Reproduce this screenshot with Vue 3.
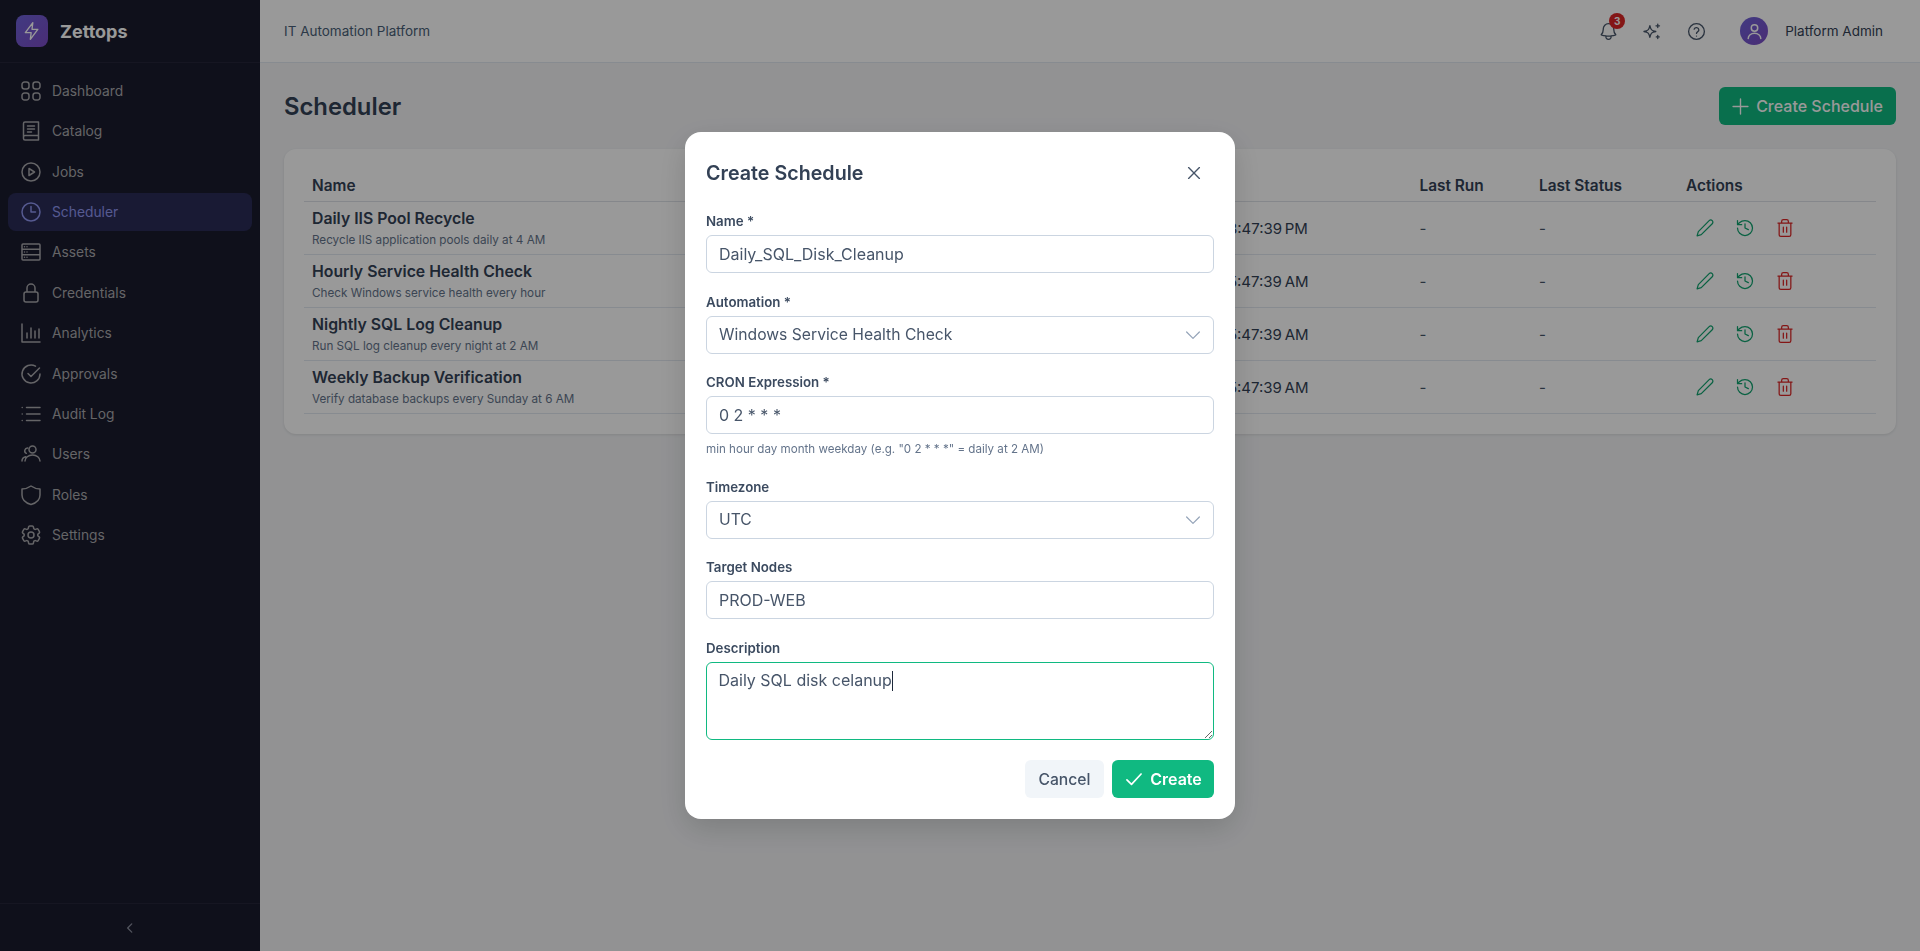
<template>
  <div class="app">
    <aside class="sidebar">
      <div class="brand">
        <div class="logo">
          <svg viewBox="0 0 24 24" width="20" height="20" fill="none" stroke="#fff" stroke-width="1.6" stroke-linejoin="round"><path d="M13 2 4 14h7l-1 8 9-12h-7l1-8z" /></svg>
        </div>
        <span class="brand-name">Zettops</span>
      </div>
      <nav class="nav">
        <a v-for="item in navItems" :key="item.label" class="nav-item" :class="{ active: item.label === 'Scheduler' }">
          <svg viewBox="0 0 24 24" width="24" height="24" fill="none" stroke="currentColor" stroke-width="1.5" stroke-linecap="round" stroke-linejoin="round"><path :d="item.icon" /></svg>
          <span>{{ item.label }}</span>
        </a>
      </nav>
      <div class="collapse">
        <svg viewBox="0 0 24 24" width="14" height="14" fill="none" stroke="currentColor" stroke-width="2.2" stroke-linecap="round" stroke-linejoin="round"><path d="M15 5l-7 7 7 7" /></svg>
      </div>
    </aside>

    <div class="content">
      <header class="topbar">
        <span class="topbar-title">IT Automation Platform</span>
        <div class="topbar-right">
          <button class="top-icon">
            <svg viewBox="0 0 24 24" width="21" height="21" fill="none" stroke="currentColor" stroke-width="1.5" stroke-linecap="round" stroke-linejoin="round"><path d="M14.857 17.082a23.848 23.848 0 005.454-1.31A8.967 8.967 0 0118 9.75V9A6 6 0 006 9v.75a8.967 8.967 0 01-2.312 6.022c1.733.64 3.56 1.085 5.455 1.31m5.714 0a24.255 24.255 0 01-5.714 0m5.714 0a3 3 0 11-5.714 0" /></svg>
            <span class="badge">3</span>
          </button>
          <button class="top-icon">
            <svg viewBox="0 0 24 24" width="21" height="21" fill="none" stroke="currentColor" stroke-width="1.5" stroke-linecap="round" stroke-linejoin="round"><path d="M9.813 15.904L9 18.75l-.813-2.846a4.5 4.5 0 00-3.09-3.09L2.25 12l2.846-.813a4.5 4.5 0 003.09-3.09L9 5.25l.813 2.846a4.5 4.5 0 003.09 3.09L15.75 12l-2.846.813a4.5 4.5 0 00-3.09 3.09zM18 3.500v4M16 5.500h4M18 16.500v3.500M16.300 18.200h3.400" /></svg>
          </button>
          <button class="top-icon">
            <svg viewBox="0 0 24 24" width="21" height="21" fill="none" stroke="currentColor" stroke-width="1.5" stroke-linecap="round" stroke-linejoin="round"><circle cx="12" cy="12" r="9" /><path d="M9.300 9.300a2.800 2.800 0 015.400 .9c0 1.900-2.700 2.200-2.700 4M12 17.200h.01" /></svg>
          </button>
          <div class="user">
            <div class="avatar">
              <svg viewBox="0 0 24 24" width="21" height="21" fill="none" stroke="#fff" stroke-width="1.7" stroke-linecap="round" stroke-linejoin="round"><circle cx="12" cy="8" r="3.700" /><path d="M4.800 20a7.200 6 0 0114.400 0" /></svg>
            </div>
            <span class="user-name">Platform Admin</span>
          </div>
        </div>
      </header>

      <main class="page">
        <div class="page-head">
          <h1>Scheduler</h1>
          <button class="btn-create">
            <svg viewBox="0 0 24 24" width="21" height="21" fill="none" stroke="currentColor" stroke-width="1.6" stroke-linecap="round"><path d="M12 3.500v17M3.500 12h17" /></svg>
            Create Schedule
          </button>
        </div>

        <section class="card">
          <table>
            <colgroup>
              <col class="c-name" /><col class="c-next" /><col class="c-last" /><col class="c-status" /><col />
            </colgroup>
            <thead>
              <tr>
                <th>Name</th>
                <th>Next Run</th>
                <th>Last Run</th>
                <th>Last Status</th>
                <th>Actions</th>
              </tr>
            </thead>
            <tbody>
              <tr v-for="row in schedules" :key="row.name">
                <td>
                  <div class="row-name">{{ row.name }}</div>
                  <div class="row-desc">{{ row.desc }}</div>
                </td>
                <td class="next">{{ row.next }}</td>
                <td class="dash">-</td>
                <td class="dash">-</td>
                <td>
                  <div class="actions">
                    <button class="act green">
                      <svg viewBox="0 0 24 24" width="20" height="20" fill="none" stroke="currentColor" stroke-width="1.5" stroke-linecap="round" stroke-linejoin="round"><path d="M17 3.200a2.600 2.600 0 013.700 3.700L7.500 20l-5 1.400L4 16.400z" /></svg>
                    </button>
                    <button class="act green">
                      <svg viewBox="0 0 24 24" width="20" height="20" fill="none" stroke="currentColor" stroke-width="1.5" stroke-linecap="round" stroke-linejoin="round"><path d="M3 12a9 9 0 109-9 9.750 9.750 0 00-6.740 2.740L3 8M3 3v5h5M12 7v5l4 2" /></svg>
                    </button>
                    <button class="act red">
                      <svg viewBox="0 0 24 24" width="20" height="20" fill="none" stroke="currentColor" stroke-width="1.5" stroke-linecap="round" stroke-linejoin="round"><path d="M3.500 6h17M19 6v14a2 2 0 01-2 2H7a2 2 0 01-2-2V6M8 6V4a2 2 0 012-2h4a2 2 0 012 2v2M10 11v6M14 11v6" /></svg>
                    </button>
                  </div>
                </td>
              </tr>
            </tbody>
          </table>
        </section>
      </main>
    </div>

    <div class="modal-overlay">
      <div class="modal-box">
        <div class="modal-header">
          <h2>Create Schedule</h2>
          <button class="close">
            <svg viewBox="0 0 24 24" width="20" height="20" fill="none" stroke="currentColor" stroke-width="1.6" stroke-linecap="round"><path d="M5.500 5.500l13 13M18.500 5.500l-13 13" /></svg>
          </button>
        </div>
        <form @submit.prevent>
          <div class="field">
            <label for="name">Name *</label>
            <input id="name" type="text" v-model="form.name" />
          </div>
          <div class="field">
            <label for="automation">Automation *</label>
            <div class="select-wrap">
              <select id="automation" v-model="form.automation">
                <option>Windows Service Health Check</option>
              </select>
              <svg class="chevron" viewBox="0 0 24 24" width="18" height="18" fill="none" stroke="currentColor" stroke-width="1.6" stroke-linecap="round" stroke-linejoin="round"><path d="M3.500 8l8.500 8.500L20.500 8" /></svg>
            </div>
          </div>
          <div class="field">
            <label for="cron">CRON Expression *</label>
            <input id="cron" type="text" v-model="form.cron" />
            <p class="hint">min hour day month weekday (e.g. "0 2 * * *" = daily at 2 AM)</p>
          </div>
          <div class="field">
            <label for="tz">Timezone</label>
            <div class="select-wrap">
              <select id="tz" v-model="form.timezone">
                <option>UTC</option>
              </select>
              <svg class="chevron" viewBox="0 0 24 24" width="18" height="18" fill="none" stroke="currentColor" stroke-width="1.6" stroke-linecap="round" stroke-linejoin="round"><path d="M3.500 8l8.500 8.500L20.500 8" /></svg>
            </div>
          </div>
          <div class="field">
            <label for="nodes">Target Nodes</label>
            <input id="nodes" type="text" v-model="form.nodes" />
          </div>
          <div class="field last">
            <label for="desc">Description</label>
            <div class="textarea-wrap">
              <textarea id="desc" v-model="form.description"></textarea>
              <div class="caret-layer"><span class="caret-text">{{ form.description }}</span></div>
            </div>
          </div>
          <div class="modal-actions">
            <button type="button" class="btn-cancel">Cancel</button>
            <button type="submit" class="btn-submit">
              <svg viewBox="0 0 24 24" width="20" height="20" fill="none" stroke="currentColor" stroke-width="2" stroke-linecap="round" stroke-linejoin="round"><path d="M3.500 13l5.500 5.500L20.500 6" /></svg>
              Create
            </button>
          </div>
        </form>
      </div>
    </div>
  </div>
</template>

<script setup>
import { ref } from 'vue'

const navItems = [
  { label: 'Dashboard', icon: 'M3 5.500A2.500 2.500 0 015.500 3h2A2.500 2.500 0 0110 5.500v2A2.500 2.500 0 017.500 10h-2A2.500 2.500 0 013 7.500zM14 5.500A2.500 2.500 0 0116.500 3h2A2.500 2.500 0 0121 5.500v2a2.500 2.500 0 01-2.500 2.500h-2A2.500 2.500 0 0114 7.500zM3 16.500A2.500 2.500 0 015.500 14h2a2.500 2.500 0 012.500 2.500v2A2.500 2.500 0 017.500 21h-2A2.500 2.500 0 013 18.500zM14 16.500a2.500 2.500 0 012.500-2.500h2a2.500 2.500 0 012.500 2.500v2a2.500 2.500 0 01-2.500 2.500h-2a2.500 2.500 0 01-2.500-2.500z' },
  { label: 'Catalog', icon: 'M4.500 4.500A1.500 1.500 0 016 3h13.500v18H6a1.500 1.500 0 01-1.500-1.500zM4.500 18A1.500 1.500 0 016 16.500h13.500M8.500 7h7M8.500 10h7M8.500 13h4' },
  { label: 'Jobs', icon: 'M21 12a9 9 0 11-18 0 9 9 0 0118 0zM10 8.500l5.500 3.500-5.500 3.500z' },
  { label: 'Scheduler', icon: 'M21 12a9 9 0 11-18 0 9 9 0 0118 0zM12 6.500V12h4.500' },
  { label: 'Assets', icon: 'M3 5a1 1 0 011-1h16a1 1 0 011 1v14a1 1 0 01-1 1H4a1 1 0 01-1-1zM3 9.300h18M3 14.700h18M5.500 6.700h.01M8 6.700h.01M5.500 12h.01M8 12h.01M5.500 17.300h.01M8 17.300h.01' },
  { label: 'Credentials', icon: 'M5 13a2 2 0 012-2h10a2 2 0 012 2v6a2 2 0 01-2 2H7a2 2 0 01-2-2zM8 11V7a4 4 0 018 0v4' },
  { label: 'Analytics', icon: 'M3 3v18h18M8 17v-5M12 17V7M16 17v-7M20 17V8' },
  { label: 'Approvals', icon: 'M21 12a9 9 0 11-4.500-7.800M20.500 6L12 14.500l-3-3' },
  { label: 'Audit Log', icon: 'M7.500 5.500H21M7.500 12H21M7.500 18.500H21M3.200 5.500h.01M3.200 12h.01M3.200 18.500h.01' },
  { label: 'Users', icon: 'M17 7.500a3.500 3.500 0 11-7 0 3.500 3.500 0 017 0zM21 19a7.500 6 0 00-15 0M3 19c0-2 1.500-3.800 3.600-4.300M8.700 6a2.800 2.800 0 00-1.400 5.300' },
  { label: 'Roles', icon: 'M12 3c2.500 1.800 5.500 2.800 9 3v6c0 4.800-3.600 8-9 9.500C6.600 20 3 16.800 3 12V6c3.500-.2 6.500-1.200 9-3z' },
  { label: 'Settings', icon: 'M9.594 3.94c.09-.542.56-.94 1.11-.94h2.593c.55 0 1.02.398 1.11.94l.213 1.281c.063.374.313.686.645.87.074.04.147.083.22.127.324.196.72.257 1.075.124l1.217-.456a1.125 1.125 0 011.37.49l1.296 2.247a1.125 1.125 0 01-.26 1.431l-1.003.827c-.293.24-.438.613-.431.992a6.759 6.759 0 010 .255c-.007.378.138.75.43.99l1.005.828c.424.35.534.954.26 1.43l-1.298 2.247a1.125 1.125 0 01-1.369.491l-1.217-.456c-.355-.133-.75-.072-1.076.124a6.57 6.57 0 01-.22.128c-.331.183-.581.495-.644.869l-.213 1.28c-.09.543-.56.941-1.11.941h-2.594c-.55 0-1.02-.398-1.11-.94l-.213-1.281c-.062-.374-.312-.686-.644-.87a6.52 6.52 0 01-.22-.127c-.325-.196-.72-.257-1.076-.124l-1.217.456a1.125 1.125 0 01-1.369-.49l-1.297-2.247a1.125 1.125 0 01.26-1.431l1.004-.827c.292-.24.437-.613.43-.992a6.932 6.932 0 010-.255c.007-.378-.138-.75-.43-.99l-1.004-.828a1.125 1.125 0 01-.26-1.43l1.297-2.247a1.125 1.125 0 011.37-.491l1.216.456c.356.133.751.072 1.076-.124.072-.044.146-.087.22-.128.332-.183.582-.495.644-.869l.214-1.281zM15 12a3 3 0 11-6 0 3 3 0 016 0z' },
]

const schedules = [
  { name: 'Daily IIS Pool Recycle', desc: 'Recycle IIS application pools daily at 4 AM', next: '1/16/2026, 3:47:39 PM' },
  { name: 'Hourly Service Health Check', desc: 'Check Windows service health every hour', next: '1/16/2026, 5:47:39 AM' },
  { name: 'Nightly SQL Log Cleanup', desc: 'Run SQL log cleanup every night at 2 AM', next: '1/16/2026, 5:47:39 AM' },
  { name: 'Weekly Backup Verification', desc: 'Verify database backups every Sunday at 6 AM', next: '1/18/2026, 5:47:39 AM' },
]

const form = ref({
  name: 'Daily_SQL_Disk_Cleanup',
  automation: 'Windows Service Health Check',
  cron: '0 2 * * *',
  timezone: 'UTC',
  nodes: 'PROD-WEB',
  description: 'Daily SQL disk celanup',
})
</script>

<style>
html, body { margin: 0; padding: 0; }
</style>

<style scoped>
.app {
  display: flex;
  height: 951px;
  overflow: hidden;
  font-family: Inter, "Liberation Sans", sans-serif;
  background: #f3f4f6;
  color: #334155;
}

button {
  font-family: inherit;
  border: none;
  background: none;
  padding: 0;
  cursor: pointer;
}

/* sidebar */
.sidebar {
  width: 260px;
  flex-shrink: 0;
  display: flex;
  flex-direction: column;
  background: #1a1b2e;
  color: #a8a8ac;
}

.brand {
  height: 62px;
  display: flex;
  align-items: center;
  gap: 12px;
  padding-left: 16px;
  border-bottom: 1px solid #26263a;
}

.logo {
  width: 32px;
  height: 32px;
  border-radius: 8px;
  display: flex;
  align-items: center;
  justify-content: center;
  background: linear-gradient(135deg, #6d62d8, #7c4bc4);
}

.brand-name {
  font-size: 18px;
  font-weight: 700;
  color: #fff;
}

.nav {
  flex: 1;
  display: flex;
  flex-direction: column;
  gap: 1.7px;
  padding: 8.600px 8px;
}

.nav-item {
  height: 38.700px;
  display: flex;
  align-items: center;
  gap: 9.500px;
  padding-left: 10.500px;
  border-radius: 8px;
  font-size: 13.800px;
}

.nav-item.active {
  background: #2a2c58;
  color: #8f96f0;
}

.collapse {
  height: 47px;
  display: flex;
  align-items: center;
  justify-content: center;
  border-top: 1px solid #26263a;
  color: #8a8f9e;
}

/* top bar */
.content {
  flex: 1;
  display: flex;
  flex-direction: column;
  min-width: 0;
}

.topbar {
  height: 62px;
  display: flex;
  align-items: center;
  justify-content: space-between;
  padding: 0 37px 0 24px;
  background: #fff;
  border-bottom: 1px solid #e2e8f0;
}

.topbar-title {
  font-size: 13.500px;
  color: #4a6078;
}

.topbar-right {
  display: flex;
  align-items: center;
}

.top-icon {
  position: relative;
  width: 44px;
  height: 36px;
  display: flex;
  align-items: center;
  justify-content: center;
  color: #475569;
}

.badge {
  position: absolute;
  top: 0;
  left: 23px;
  width: 16px;
  height: 16px;
  border-radius: 50%;
  display: flex;
  align-items: center;
  justify-content: center;
  background: #dc2626;
  color: #fff;
  font-size: 10px;
  font-weight: 700;
}

.user {
  display: flex;
  align-items: center;
  gap: 17px;
  margin-left: 22px;
}

.avatar {
  width: 28px;
  height: 28px;
  border-radius: 50%;
  display: flex;
  align-items: center;
  justify-content: center;
  background: linear-gradient(135deg, #6d62d8, #7c4bc4);
}

.user-name {
  font-size: 13.500px;
  color: #334155;
}

/* page */
.page {
  flex: 1;
  padding: 24px;
}

.page-head {
  height: 38px;
  display: flex;
  align-items: center;
  justify-content: space-between;
  margin-bottom: 24px;
}

h1 {
  margin: 0;
  font-size: 23.800px;
  font-weight: 600;
  color: #334155;
}

.btn-create {
  height: 38px;
  width: 177px;
  display: flex;
  align-items: center;
  justify-content: center;
  gap: 5px;
  padding-right: 2px;
  border-radius: 6px;
  background: #10b981;
  color: #fff;
  font-size: 16px;
  font-weight: 500;
}

.card {
  background: #fff;
  border-radius: 12px;
  padding: 20px;
  box-shadow: 0 1px 3px rgba(0, 0, 0, 0.1);
}

table {
  width: 100%;
  table-layout: fixed;
  border-collapse: collapse;
  font-size: 15px;
}

.c-name { width: 840px; }
.c-next { width: 267.500px; }
.c-last { width: 119.500px; }
.c-status { width: 147px; }

th {
  height: 32px;
  padding: 0 8px;
  text-align: left;
  font-size: 15.400px;
  font-weight: 600;
  color: #334155;
  border-bottom: 1px solid #dee2e8;
}

td {
  height: 52px;
  padding: 0 8px;
  border-bottom: 1px solid #e2e8f0;
  color: #334155;
  white-space: nowrap;
}

.next {
  word-spacing: -1.500px;
}

.row-name {
  font-size: 15.800px;
  font-weight: 600;
}

.row-desc {
  margin-top: 5px;
  font-size: 11.700px;
  color: #64748b;
}

.dash {
  color: #475569;
}

.actions {
  display: flex;
  gap: 2px;
}

.act {
  width: 38px;
  height: 38px;
  display: flex;
  align-items: center;
  justify-content: center;
}

.green { color: #10a36f; }
.red { color: #dc2626; }

/* modal */
.modal-overlay {
  position: fixed;
  inset: 0;
  display: flex;
  align-items: center;
  justify-content: center;
  background: rgba(0, 0, 0, 0.4);
  z-index: 1000;
}

.modal-box {
  width: 550px;
  box-sizing: border-box;
  padding: 21px;
  border-radius: 16px;
  background: #fff;
  box-shadow: 0 10px 30px rgba(0, 0, 0, 0.15);
}

.modal-header {
  height: 40px;
  display: flex;
  align-items: center;
  justify-content: space-between;
}

h2 {
  margin: 0;
  font-size: 19.700px;
  font-weight: 600;
  color: #334155;
}

.close {
  width: 40px;
  height: 40px;
  display: flex;
  align-items: center;
  justify-content: center;
  color: #475569;
}

form {
  display: flex;
  flex-direction: column;
  padding-top: 19.800px;
}

.field {
  margin-bottom: 20.500px;
}

.field.last {
  margin-bottom: 20.200px;
}

label {
  display: block;
  height: 17px;
  line-height: 17px;
  margin-bottom: 5px;
  font-size: 13.300px;
  font-weight: 600;
  color: #3b4a5f;
}

input,
select,
textarea {
  display: block;
  width: 100%;
  box-sizing: border-box;
  height: 38px;
  padding: 0 12px;
  border: 1px solid #cbd5e1;
  border-radius: 6px;
  background: #fff;
  font-family: inherit;
  font-size: 16px;
  color: #475569;
  outline: none;
  appearance: none;
}

select {
  font-size: 15.700px;
}

.select-wrap {
  position: relative;
}

.chevron {
  position: absolute;
  right: 12px;
  top: 10px;
  color: #94a3b8;
  pointer-events: none;
}

.hint {
  margin: 6px 0 0;
  height: 18px;
  line-height: 18px;
  font-size: 11.600px;
  color: #64748b;
}

.textarea-wrap {
  position: relative;
}

textarea {
  height: 78px;
  padding: 7.500px 11.500px;
  border: 1.500px solid #10b981;
  line-height: 20px;
  resize: vertical;
  appearance: auto;
}

.caret-layer {
  position: absolute;
  top: 1px;
  left: 1px;
  padding: 8px 12px;
  font-size: 16px;
  line-height: 20px;
  pointer-events: none;
}

.caret-text {
  color: transparent;
  border-right: 1px solid #1e293b;
}

.modal-actions {
  display: flex;
  justify-content: flex-end;
  gap: 8px;
}

.btn-cancel {
  width: 79px;
  height: 38px;
  padding-top: 1px;
  border-radius: 6px;
  background: #f1f5f9;
  color: #475569;
  font-size: 15.700px;
  font-weight: 500;
}

.btn-submit {
  width: 102px;
  height: 38px;
  display: flex;
  align-items: center;
  justify-content: center;
  gap: 6px;
  border-radius: 6px;
  background: #10b981;
  color: #fff;
  font-size: 16px;
  font-weight: 600;
}
</style>
